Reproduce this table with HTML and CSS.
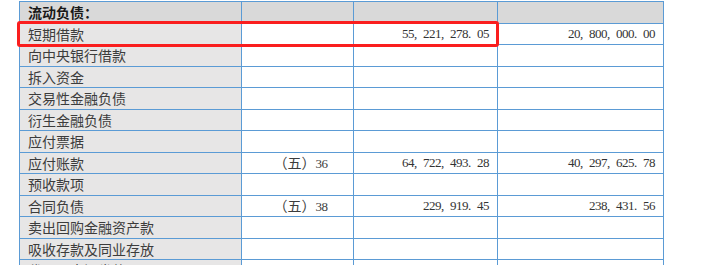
FILE: index.html
```html
<!DOCTYPE html>
<html lang="zh-CN">
<head>
<meta charset="utf-8">
<title>流动负债</title>
<link rel="stylesheet" href="styles.css">
</head>
<body>
<div class="wrap">
  <div class="sheet">
    <div class="cell hd lbl bold">流动负债：</div><div class="cell hd"></div><div class="cell hd"></div><div class="cell hd"></div>

    <div class="cell lbl">短期借款</div><div class="cell"></div><div class="cell num">55, 221, 278. 05</div><div class="cell num">20, 800, 000. 00</div>

    <div class="cell lbl">向中央银行借款</div><div class="cell"></div><div class="cell"></div><div class="cell"></div>
    <div class="cell lbl">拆入资金</div><div class="cell"></div><div class="cell"></div><div class="cell"></div>
    <div class="cell lbl">交易性金融负债</div><div class="cell"></div><div class="cell"></div><div class="cell"></div>
    <div class="cell lbl">衍生金融负债</div><div class="cell"></div><div class="cell"></div><div class="cell"></div>
    <div class="cell lbl">应付票据</div><div class="cell"></div><div class="cell"></div><div class="cell"></div>

    <div class="cell lbl">应付账款</div><div class="cell note"><span>（五）<span class="d">36</span></span></div><div class="cell num">64, 722, 493. 28</div><div class="cell num">40, 297, 625. 78</div>

    <div class="cell lbl">预收款项</div><div class="cell"></div><div class="cell"></div><div class="cell"></div>

    <div class="cell lbl">合同负债</div><div class="cell note"><span>（五）<span class="d">38</span></span></div><div class="cell num">229, 919. 45</div><div class="cell num">238, 431. 56</div>

    <div class="cell lbl">卖出回购金融资产款</div><div class="cell"></div><div class="cell"></div><div class="cell"></div>
    <div class="cell lbl">吸收存款及同业存放</div><div class="cell"></div><div class="cell"></div><div class="cell"></div>
    <div class="cell lbl">代理买卖证券款</div><div class="cell"></div><div class="cell"></div><div class="cell"></div>
  </div>
  <div class="highlight"></div>
</div>
</body>
</html>
```

FILE: styles.css
```css
html, body {
  margin: 0;
  padding: 0;
  background: #ffffff;
  overflow: hidden;
  height: 265px;
}

.wrap {
  position: relative;
  padding: 1px 0 0 19px;
}

.sheet {
  display: grid;
  grid-template-columns: 221px 111px 143px 165px;
  grid-auto-rows: 20.5px;
  gap: 1px;
  padding: 1px;
  width: max-content;
  background: #5b9bd5;
  font-family: "Noto Sans CJK SC", "Liberation Serif", sans-serif;
  font-size: 14px;
  color: #3c3c3c;
}

.cell {
  background: #ffffff;
  display: flex;
  align-items: center;
  padding: 0 8px;
  line-height: 1;
  white-space: pre;
  overflow: hidden;
}

.lbl {
  background: #e7e6e6;
}

.hd {
  background: #d9d9d9;
}

.bold {
  font-weight: 700;
  color: #1a1a1a;
}

.num {
  justify-content: flex-end;
  font-family: "Liberation Serif", serif;
  font-size: 13px;
  letter-spacing: -0.5px;
  word-spacing: 3.5px;
  padding-right: 8px;
  color: #333333;
}

.note {
  justify-content: center;
  padding-left: 14px;
}

.d {
  font-family: "Liberation Serif", serif;
  font-size: 13px;
  letter-spacing: -0.5px;
}

.highlight {
  position: absolute;
  left: 17px;
  top: 21px;
  width: 476px;
  height: 20px;
  border: 3px solid #fa1e1e;
  border-radius: 3px;
}
```
